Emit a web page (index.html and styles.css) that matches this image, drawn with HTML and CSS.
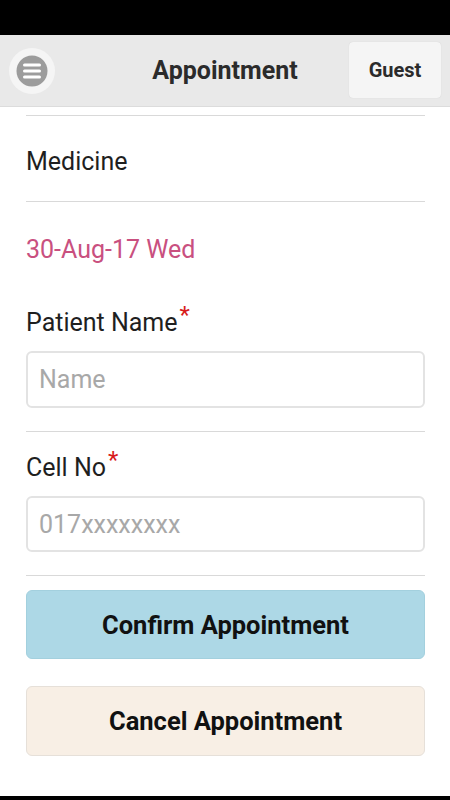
FILE: index.html
```html
<!DOCTYPE html>
<html>
<head>
<meta charset="utf-8">
<link rel="stylesheet" href="styles.css">
</head>
<body>
<div class="status"></div>
<header class="header">
  <div class="menu-btn">
    <svg width="46" height="46" viewBox="0 0 46 46">
      <circle cx="23" cy="23" r="23" fill="#f5f5f5"/>
      <circle cx="23" cy="23" r="15.5" fill="#9c9c9c"/>
      <rect x="14" y="15.5" width="18" height="3" rx="1.5" fill="#fff"/>
      <rect x="14" y="21.5" width="18" height="3" rx="1.5" fill="#fff"/>
      <rect x="14" y="27.5" width="18" height="3" rx="1.5" fill="#fff"/>
    </svg>
  </div>
  <h1 class="title">Appointment</h1>
  <button class="guest">Guest</button>
</header>
<main class="content">
  <div class="dept">Medicine</div>
  <div class="date">30-Aug-17 Wed</div>
  <div class="label label-first">Patient Name<span class="req">*</span></div>
  <div class="input"><span class="ph">Name</span></div>
  <div class="label label-second">Cell No<span class="req">*</span></div>
  <div class="input input-cell"><span class="ph">017xxxxxxxx</span></div>
  <button class="btn btn-confirm">Confirm Appointment</button>
  <button class="btn btn-cancel">Cancel Appointment</button>
</main>
<div class="navbar"></div>
</body>
</html>
```
FILE: styles.css
```css
* { box-sizing: border-box; }
html, body { margin: 0; padding: 0; }
body {
  width: 450px;
  height: 800px;
  overflow: hidden;
  background: #fff;
  font-family: Roboto, "Liberation Sans", sans-serif;
  color: #1f1f1f;
  display: flex;
  flex-direction: column;
}
.status { height: 35px; background: #000; flex: none; }
.header {
  height: 72px;
  flex: none;
  background: #e9e9e9;
  display: flex;
  align-items: center;
  padding: 0 9px 0 9px;
  border-bottom: 1px solid #dcdcdc;
}
.menu-btn { width: 46px; height: 46px; display: flex; }
.title {
  flex: 1;
  margin: 0;
  text-align: center;
  font-size: 25px;
  font-weight: 700;
  color: #2b2b2b;
  padding-left: 46px;
}
.guest {
  width: 92px;
  height: 56px;
  margin-top: -2px;
  border: none;
  border-radius: 4px;
  background: #f5f5f5;
  box-shadow: 0 0 1px rgba(0,0,0,0.15);
  font-family: Roboto, "Liberation Sans", sans-serif;
  font-size: 20px;
  font-weight: 700;
  color: #2b2b2b;
}
.content {
  flex: 1;
  padding: 8px 25px 0 26px;
  display: flex;
  flex-direction: column;
}
.dept {
  border-top: 1px solid #d9d9d9;
  border-bottom: 1px solid #d9d9d9;
  padding: 33px 0 26px;
  font-size: 25px;
  line-height: 26px;
}
.date {
  margin-top: 35px;
  font-size: 25px;
  line-height: 26px;
  color: #c9507f;
}
.label {
  font-size: 25px;
  line-height: 26px;
  color: #1f1f1f;
}
.label-first { margin-top: 47px; }
.label-second { margin-top: 24px; }
.req {
  color: #d81b1b;
  font-size: 24px;
  position: relative;
  top: -8px;
  margin-left: 2px;
}
.input {
  margin-top: 15px;
  height: 57px;
  border: 2px solid #e3e3e3;
  border-radius: 6px;
  padding: 0 11px;
  display: flex;
  align-items: center;
  font-size: 25px;
  color: #a8a8a8;
  margin-bottom: 23px;
  position: relative;
}
.input::after {
  content: "";
  position: absolute;
  left: -2px;
  right: -2px;
  bottom: -26px;
  border-bottom: 1px solid #d9d9d9;
}
.input-cell { height: 56px; }
.btn {
  display: block;
  width: 100%;
  height: 69px;
  border-radius: 6px;
  font-family: Roboto, "Liberation Sans", sans-serif;
  font-size: 25.5px;
  font-weight: 700;
  color: #111;
}
.btn-confirm {
  margin-top: 15px;
  background: #add8e6;
  border: 1px solid #a3d0de;
}
.btn-cancel {
  margin-top: 27px;
  height: 70px;
  background: #f8efe5;
  border: 1px solid #e6e0d9;
}
.navbar { height: 4px; background: #000; flex: none; }
```
